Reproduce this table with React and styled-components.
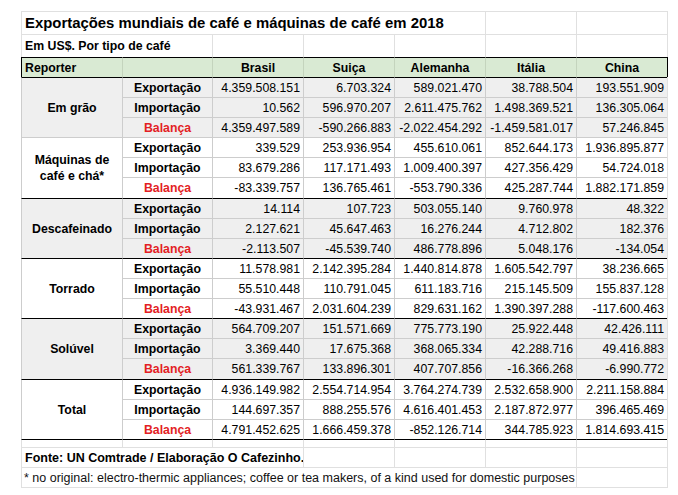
import React from 'react'
import styled, { createGlobalStyle } from 'styled-components'

const GlobalStyle = createGlobalStyle`
    body {
        margin: 0;
        background: #ffffff;
        font-family: "Liberation Sans", Arial, sans-serif;
        color: #000000;
    }
`

const GRID = '#e0e0e0'
const LINE = '#cdcdcd'
const SHADE = '#efefef'

const Page = styled.div`
    padding: 11px 0 0 21px;
`

// rows: title, subtitle, header, 18 data rows, spacer, source, note
const Sheet = styled.div`
    display: grid;
    grid-template-columns: 101px 90px repeat(5, 91px);
    grid-template-rows:
        23px 23px 20px
        20px 20px 20px 20px 20px 21px
        20px 20px 20px 20px 20px 20px
        20px 20px 21px 20px 20px 20px
        8px 20px 20px;
    width: max-content;
    border-right: 1px solid ${GRID};
    border-bottom: 1px solid ${GRID};
`

const Cell = styled.div`
    box-sizing: border-box;
    grid-column: span ${(p) => p.$span || 1};
    grid-row: span ${(p) => p.$rows || 1};
    border-top: 1px solid ${(p) => p.$top || GRID};
    border-left: 1px solid ${(p) => p.$left || GRID};
    background: ${(p) => p.$bg || 'transparent'};
    display: flex;
    align-items: center;
    overflow: hidden;
    white-space: nowrap;
    font-size: 12.3px;
`

const TitleCell = styled(Cell)`
    padding-left: 3px;
    font-size: 14.9px;
    font-weight: 700;
    overflow: visible;
`

const SubtitleCell = styled(Cell)`
    padding-left: 3px;
    font-size: 12.3px;
    font-weight: 700;
`

const HeaderCell = styled(Cell)`
    background: #d9ead3;
    border-top-color: #000;
    border-left-color: ${(p) => (p.$first ? '#000' : '#c4d4bd')};
    justify-content: ${(p) => (p.$first ? 'flex-start' : 'center')};
    padding-left: ${(p) => (p.$first ? '3px' : '0')};
    font-weight: 700;
    box-shadow: ${(p) => (p.$last ? '1px 0 0 #000' : 'none')};
`

const GroupCell = styled(Cell)`
    justify-content: center;
    text-align: center;
    white-space: normal;
    font-weight: 700;
    line-height: 16px;
    padding: 0 6px;
`

const TypeCell = styled(Cell)`
    justify-content: center;
    font-weight: 700;
    color: ${(p) => (p.$red ? '#e31e24' : '#000')};
    border-left-color: ${LINE};
`

const NumCell = styled(Cell)`
    justify-content: flex-end;
    padding-right: 3px;
    border-left-color: ${LINE};
`

const SourceCell = styled(Cell)`
    padding-left: 3px;
    font-size: 12.5px;
    font-weight: 700;
`

const NoteCell = styled(Cell)`
    padding-left: 2px;
    font-size: 12.5px;
    color: #111;
`

const countries = ['Brasil', 'Suiça', 'Alemanha', 'Itália', 'China']
const types = ['Exportação', 'Importação', 'Balança']

const groups = [
    { name: 'Em grão', shade: true, line: '#000', rows: [
        ['4.359.508.151', '6.703.324', '589.021.470', '38.788.504', '193.551.909'],
        ['10.562', '596.970.207', '2.611.475.762', '1.498.369.521', '136.305.064'],
        ['4.359.497.589', '-590.266.883', '-2.022.454.292', '-1.459.581.017', '57.246.845'],
    ] },
    { name: 'Máquinas de café e chá*', shade: false, line: LINE, rows: [
        ['339.529', '253.936.954', '455.610.061', '852.644.173', '1.936.895.877'],
        ['83.679.286', '117.171.493', '1.009.400.397', '427.356.429', '54.724.018'],
        ['-83.339.757', '136.765.461', '-553.790.336', '425.287.744', '1.882.171.859'],
    ] },
    { name: 'Descafeinado', shade: true, line: '#000', rows: [
        ['14.114', '107.723', '503.055.140', '9.760.978', '48.322'],
        ['2.127.621', '45.647.463', '16.276.244', '4.712.802', '182.376'],
        ['-2.113.507', '-45.539.740', '486.778.896', '5.048.176', '-134.054'],
    ] },
    { name: 'Torrado', shade: false, line: '#000', rows: [
        ['11.578.981', '2.142.395.284', '1.440.814.878', '1.605.542.797', '38.236.665'],
        ['55.510.448', '110.791.045', '611.183.716', '215.145.509', '155.837.128'],
        ['-43.931.467', '2.031.604.239', '829.631.162', '1.390.397.288', '-117.600.463'],
    ] },
    { name: 'Solúvel', shade: true, line: '#000', rows: [
        ['564.709.207', '151.571.669', '775.773.190', '25.922.448', '42.426.111'],
        ['3.369.440', '17.675.368', '368.065.334', '42.288.716', '49.416.883'],
        ['561.339.767', '133.896.301', '407.707.856', '-16.366.268', '-6.990.772'],
    ] },
    { name: 'Total', shade: false, line: '#000', rows: [
        ['4.936.149.982', '2.554.714.954', '3.764.274.739', '2.532.658.900', '2.211.158.884'],
        ['144.697.357', '888.255.576', '4.616.401.453', '2.187.872.977', '396.465.469'],
        ['4.791.452.625', '1.666.459.378', '-852.126.714', '344.785.923', '1.814.693.415'],
    ] },
]

function Group({ group }) {
    const bg = group.shade ? SHADE : '#fff'
    return (
        <>
            {group.rows.map((values, r) => {
                const top = r === 0 ? group.line : LINE
                return (
                    <React.Fragment key={r}>
                        {r === 0 && (
                            <GroupCell $rows={3} $top={group.line} $left={LINE} $bg={bg}>{group.name}</GroupCell>
                        )}
                        <TypeCell $top={top} $bg={bg} $red={r === 2}>{types[r]}</TypeCell>
                        {values.map((v, i) => (
                            <NumCell key={i} $top={top} $bg={bg}>{v}</NumCell>
                        ))}
                    </React.Fragment>
                )
            })}
        </>
    )
}

export default function App() {
    return (
        <Page>
            <GlobalStyle />
            <Sheet>
                <TitleCell $span={5}>Exportações mundiais de café e máquinas de café em 2018</TitleCell>
                <Cell />
                <Cell />

                <SubtitleCell $span={2}>Em US$. Por tipo de café</SubtitleCell>
                {countries.map((c) => <Cell key={c} />)}

                <HeaderCell $first>Reporter</HeaderCell>
                <HeaderCell />
                {countries.map((c, i) => (
                    <HeaderCell key={c} $last={i === countries.length - 1}>{c}</HeaderCell>
                ))}

                {groups.map((g) => <Group key={g.name} group={g} />)}

                {[0, 1, 2, 3, 4, 5, 6].map((i) => <Cell key={i} $top="#000" />)}

                <SourceCell $span={3}>Fonte: UN Comtrade / Elaboração O Cafezinho.</SourceCell>
                {[0, 1, 2, 3].map((i) => <Cell key={i} />)}

                <NoteCell $span={6}>* no original: electro-thermic appliances; coffee or tea makers, of a kind used for domestic purposes</NoteCell>
                <Cell />
            </Sheet>
        </Page>
    )
}
